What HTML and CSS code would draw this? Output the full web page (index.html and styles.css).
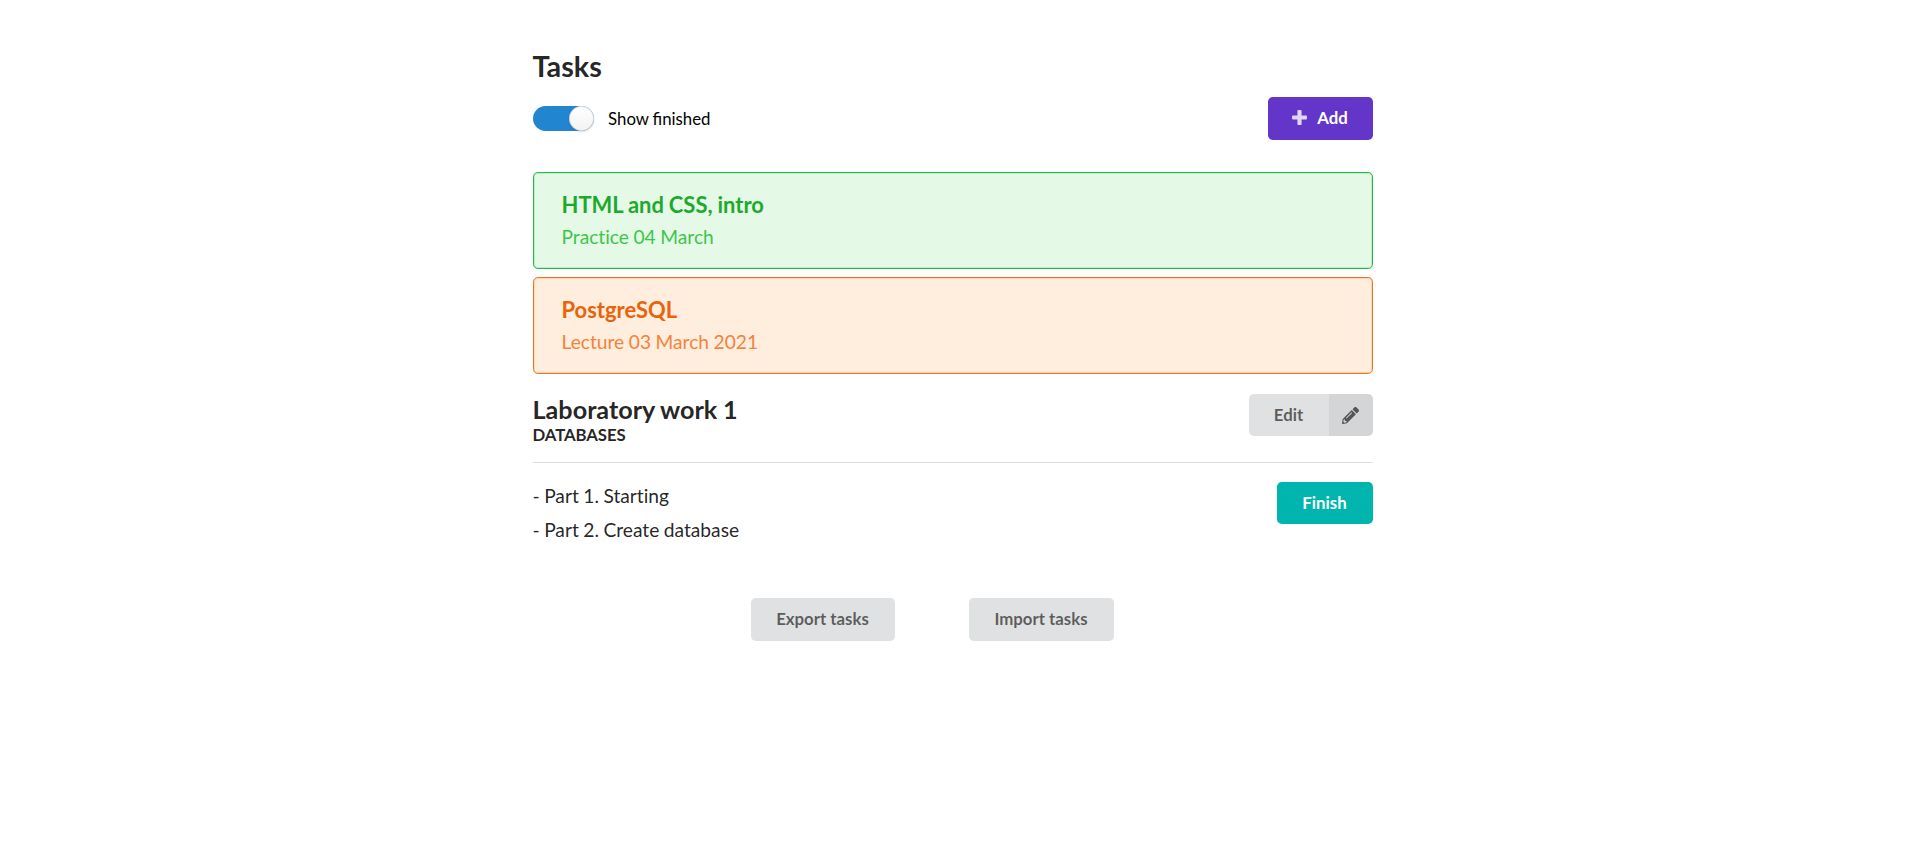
FILE: index.html
```html
<!DOCTYPE html>
<html lang="en">
<head>
<meta charset="utf-8">
<title>Tasks</title>
<link rel="stylesheet" href="styles.css">
</head>
<body>
<main class="container">
  <h2 class="title">Tasks</h2>
  <div class="toolbar">
    <label class="toggle"><span class="track"><span class="knob"></span></span><span class="toggle-text">Show finished</span></label>
    <button class="button violet">
      <svg class="plus" viewBox="0 0 448 512"><path fill="currentColor" d="M448 294.200v-76.400c0-13.300-10.700-24-24-24H286.200V56c0-13.300-10.700-24-24-24h-76.400c-13.300 0-24 10.700-24 24v137.800H24c-13.300 0-24 10.700-24 24v76.400c0 13.300 10.700 24 24 24h137.800V456c0 13.300 10.700 24 24 24h76.400c13.300 0 24-10.700 24-24V318.200H424c13.300 0 24-10.700 24-24z"/></svg>
      Add
    </button>
  </div>
  <section class="message green">
    <div class="header">HTML and CSS, intro</div>
    <p>Practice 04 March</p>
  </section>
  <section class="message orange">
    <div class="header">PostgreSQL</div>
    <p>Lecture 03 March 2021</p>
  </section>
  <section class="task">
    <div class="task-head">
      <div class="task-name">
        <h3 class="task-title">Laboratory work 1</h3>
        <div class="subject">DATABASES</div>
      </div>
      <button class="button edit"><span class="edit-label">Edit</span><span class="edit-icon"><svg class="pencil" viewBox="0 0 512 512"><path fill="currentColor" d="M497.900 142.100l-46.100 46.100c-4.700 4.700-12.300 4.700-17 0l-111-111c-4.700-4.700-4.700-12.300 0-17l46.100-46.100c18.700-18.700 49.100-18.700 67.900 0l60.100 60.100c18.800 18.700 18.800 49.100 0 67.900zM284.200 99.800L21.600 362.400.4 483.900c-2.900 16.400 11.400 30.600 27.800 27.800l121.500-21.300 262.600-262.600c4.700-4.700 4.700-12.300 0-17l-111-111c-4.800-4.700-12.400-4.700-17.100 0zM124.100 339.900c-5.500-5.500-5.500-14.300 0-19.800l154-154c5.500-5.500 14.300-5.500 19.800 0s5.500 14.300 0 19.800l-154 154c-5.500 5.500-14.300 5.500-19.800 0zM88 424h48v36.300l-64.500 11.300-31.100-31.100L51.700 376H88v48z"/></svg></span></button>
    </div>
    <div class="task-body">
      <div class="parts"><p>- Part 1. Starting</p><p>- Part 2. Create database</p></div>
      <button class="button teal">Finish</button>
    </div>
  </section>
  <div class="actions">
    <button class="button export">Export tasks</button>
    <button class="button import">Import tasks</button>
  </div>
</main>
</body>
</html>
```
FILE: styles.css
```css
* { box-sizing: border-box; }
body {
  margin: 0;
  background: #fff;
  color: rgba(0, 0, 0, .87);
  font: 16.8px/1.4285 Lato, sans-serif;
  font-variant-ligatures: none;
  word-spacing: -.4px;
}
h2, h3, p { margin: 0; }
.container { width: 840px; margin: 0 auto; padding-top: 48px; }
.title { font-size: 28.8px; line-height: 37px; }
.toolbar { display: flex; justify-content: space-between; margin-top: 12px; height: 43px; }
.toggle { display: flex; align-items: center; gap: 14.400px; height: 43px; color: #000; }
.toggle-text { font-variant-ligatures: normal; }
.track { position: relative; width: 61.200px; height: 25.2px; border-radius: 13px; background: #2185d0; }
.knob {
  position: absolute;
  right: 0;
  top: 0;
  width: 25.2px;
  height: 25.2px;
  border-radius: 50%;
  background: #fff linear-gradient(transparent, rgba(0, 0, 0, .05));
  box-shadow: 0 1px 2px rgba(34, 36, 38, .15), inset 0 0 0 1px rgba(34, 36, 38, .15);
}
.button {
  display: flex;
  align-items: center;
  justify-content: center;
  height: 43px;
  padding: 0 0 3px;
  border: 0;
  border-radius: 4.8px;
  background: #e0e1e2;
  color: rgba(0, 0, 0, .6);
  font: bold 16.8px/17px Lato, sans-serif;
}
.violet { width: 105px; background: #6435c9; color: #fff; }
.plus { width: 15px; height: 17px; margin: 1px 10px 0 0; opacity: .8; }
.message {
  height: 97px;
  padding: 15.500px 28px 0;
  border: 1px solid;
  border-radius: 4.8px;
  font-size: 19.2px;
}
.message .header { font-size: 21.94px; font-weight: bold; line-height: 31.340px; }
.message p { margin-top: 3px; line-height: 27.430px; opacity: .85; }
.message.green { margin-top: 32px; border-color: #21ba45; background: #e5f9e7; box-shadow: inset 0 0 0 1px rgba(33, 186, 69, .2); color: #1ebc30; }
.green .header { color: #1ea92e; }
.message.orange { margin-top: 8px; border-color: #f2711c; background: #ffedde; box-shadow: inset 0 0 0 1px rgba(242, 113, 28, .2); color: #f2711c; }
.orange .header { color: #e7640d; }
.task-head {
  display: flex;
  justify-content: space-between;
  height: 69px;
  margin-top: 20px;
  border-bottom: 1px solid rgba(34, 36, 38, .15);
}
.task-name { margin-top: -1px; }
.task-title { font-size: 25.2px; line-height: 32px; }
.subject { font-size: 16.8px; font-weight: bold; line-height: 20px; letter-spacing: -.1px; }
.edit { width: 124px; height: 42px; padding: 0; overflow: hidden; }
.edit-label { width: 80px; padding-bottom: 2px; }
.edit-icon { display: flex; flex: 1; height: 100%; align-items: center; justify-content: center; background: rgba(0, 0, 0, .05); }
.pencil { width: 17px; height: 17px; }
.task-body { display: flex; justify-content: space-between; height: 65px; margin-top: 19px; }
.parts { font-size: 19.2px; line-height: 34px; margin-top: -3.500px; }
.teal { width: 96px; height: 42px; padding-bottom: 1px; background: #00b5ad; color: #fff; }
.actions { display: flex; gap: 74px; margin: 51px 0 0 218px; }
.export { width: 144px; }
.import { width: 145px; }
```
